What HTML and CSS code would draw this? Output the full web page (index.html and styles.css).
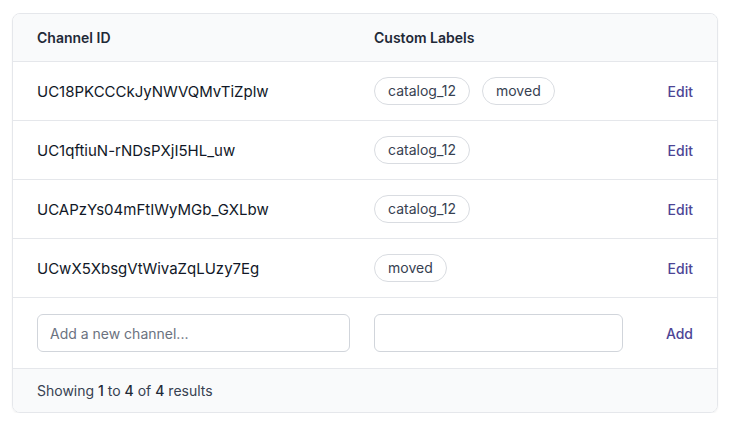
FILE: index.html
```html
<!DOCTYPE html>
<html lang="en">
<head>
<meta charset="utf-8">
<link rel="stylesheet" href="styles.css">
</head>
<body>
<div class="card">
  <div class="row head">
    <div>Channel ID</div>
    <div>Custom Labels</div>
    <div></div>
  </div>
  <div class="row">
    <div class="id">UC18PKCCCkJyNWVQMvTiZplw</div>
    <div class="labels"><span class="pill">catalog_12</span><span class="pill">moved</span></div>
    <div class="act"><a class="link">Edit</a></div>
  </div>
  <div class="row">
    <div class="id">UC1qftiuN-rNDsPXjI5HL_uw</div>
    <div class="labels"><span class="pill">catalog_12</span></div>
    <div class="act"><a class="link">Edit</a></div>
  </div>
  <div class="row">
    <div class="id">UCAPzYs04mFtIWyMGb_GXLbw</div>
    <div class="labels"><span class="pill">catalog_12</span></div>
    <div class="act"><a class="link">Edit</a></div>
  </div>
  <div class="row">
    <div class="id">UCwX5XbsgVtWivaZqLUzy7Eg</div>
    <div class="labels"><span class="pill">moved</span></div>
    <div class="act"><a class="link">Edit</a></div>
  </div>
  <div class="row addrow">
    <div><input class="field" type="text" placeholder="Add a new channel..."></div>
    <div><input class="field" type="text"></div>
    <div class="act"><a class="link">Add</a></div>
  </div>
  <div class="foot">Showing <b>1</b> to <b>4</b> of <b>4</b> results</div>
</div>
</body>
</html>
```
FILE: styles.css
```css
* { box-sizing: border-box; }
html, body { margin: 0; background: #fff; }
body {
  font-family: Inter, "Noto Sans", sans-serif;
  font-size: 14px;
  color: #111827;
  padding: 13px 17px 0 12px;
}
.card {
  width: 706px;
  border: 1px solid #e5e7eb;
  border-radius: 8px;
  overflow: hidden;
  box-shadow: 0 1px 2px rgba(0,0,0,0.06);
}
.row {
  display: grid;
  grid-template-columns: 313px 249px 1fr;
  column-gap: 24px;
  align-items: center;
  padding: 0 24px;
  height: 59px;
  border-top: 1px solid #e5e7eb;
}
.row.head {
  border-top: 0;
  height: 47px;
  background: #f9fafb;
  font-weight: 600;
  color: #1f2937;
}
.id { color: #111827; font-size: 15px; }
.labels { display: flex; gap: 12px; }
.pill {
  display: inline-block;
  height: 28px;
  line-height: 26px;
  padding: 0 13px;
  border: 1px solid #d9dce1;
  border-radius: 999px;
  color: #374151;
}
.act { text-align: right; }
.link { color: #4d4595; font-weight: 500; cursor: pointer; }
.addrow { height: 71px; }
.field {
  display: block;
  width: 100%;
  height: 38px;
  border: 1px solid #d1d5db;
  border-radius: 6px;
  padding: 0 12px;
  font-family: inherit;
  font-size: 14px;
  color: #111827;
  background: #fff;
  outline: none;
}
.field::placeholder { color: #6b7280; }
.foot {
  border-top: 1px solid #e5e7eb;
  background: #f9fafb;
  height: 44px;
  line-height: 43px;
  padding: 0 24px;
  color: #374151;
}
.foot b { font-weight: 500; color: #1f2937; }
```
